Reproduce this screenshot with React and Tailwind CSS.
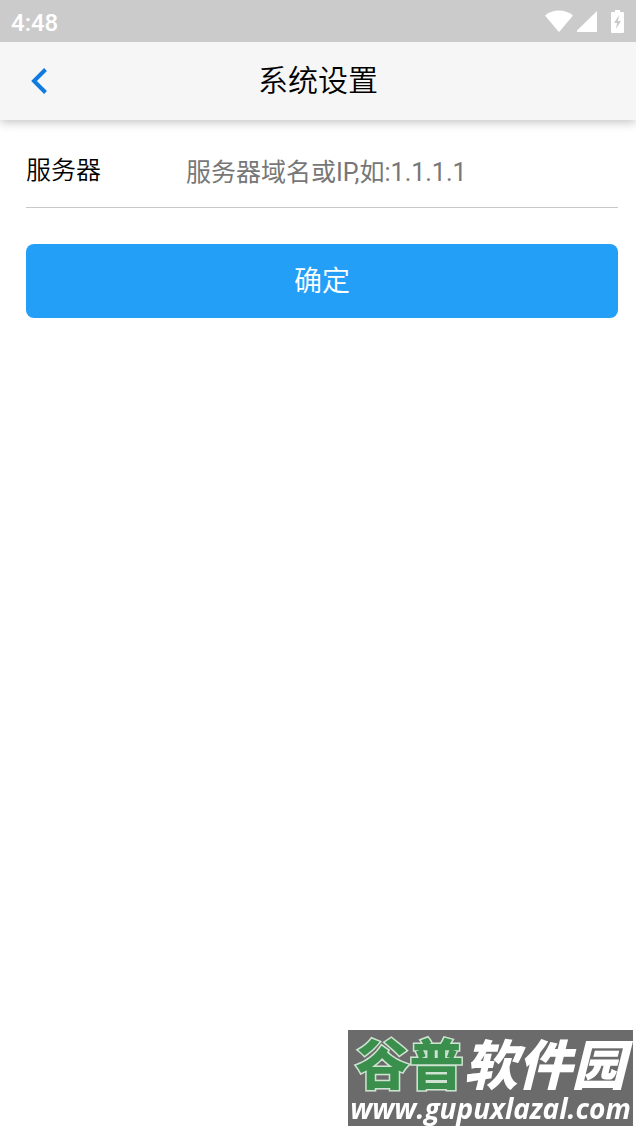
import { useState } from 'react'

function StatusBar() {
  return (
    <div className="relative z-10 flex h-[42px] items-center justify-between bg-[#cbcbcb] pl-[11px] pr-3 text-white">
      <span className="pt-1 text-2xl font-medium">4:48</span>
      <div className="flex items-center">
        <svg className="mr-1 h-[22px] w-7" viewBox="0 0 28 22" fill="currentColor" aria-label="Wi-Fi">
          <path d="M0 5.5C8-1.2 20-1.2 28 5.5L14.6 21.5Q14 22 13.4 21.5Z" />
        </svg>
        <svg className="mr-3.5 h-[22px] w-5" viewBox="0 0 20 22" fill="currentColor" aria-label="Signal">
          <path d="M20 1V22H0V20.5Z" />
        </svg>
        <svg className="h-[23px] w-[13px]" viewBox="0 0 13 23" fill="currentColor" aria-label="Battery">
          <path
            fillRule="evenodd"
            d="M4 0H9V2H12Q13 2 13 3V22Q13 23 12 23H1Q0 23 0 22V3Q0 2 1 2H4ZM8 5L3 13H6L5 19L10 11H7Z"
          />
        </svg>
      </div>
    </div>
  )
}

function NavBar() {
  return (
    <header className="grid h-[78px] grid-cols-[1fr_auto_1fr] items-center bg-[#f6f6f6] shadow-[0_2px_10px_rgba(0,0,0,0.25)]">
      <button type="button" aria-label="返回" className="justify-self-start pl-[30px] text-[#0f7be0]">
        <svg className="h-7 w-[18px]" viewBox="0 0 18 28" fill="none" stroke="currentColor" strokeWidth="4">
          <path d="M15.5 2.5L4 14L15.5 25.5" />
        </svg>
      </button>
      <h1 className="text-[30px] font-[350] leading-9">系统设置</h1>
    </header>
  )
}

function Watermark() {
  return (
    <div className="fixed bottom-1 right-[3px] flex h-24 w-[285px] flex-col items-center bg-[#6b6b6b] pt-2.5 font-bold text-white">
      <div className="whitespace-nowrap text-[54px] font-black leading-[54px]">
        <span className="text-[#3a8f4c] [paint-order:stroke_fill] [-webkit-text-stroke:3px_#cfe3d2]">谷普</span>
        <span className="italic">软件园</span>
      </div>
      <div className="whitespace-nowrap font-['Open_Sans','Noto_Sans',sans-serif] text-[28px] italic leading-7">
        www.gupuxlazal.com
      </div>
    </div>
  )
}

export default function App() {
  const [server, setServer] = useState('')

  return (
    <div className="min-h-screen bg-white font-[Roboto,'Noto_Sans_CJK_SC',sans-serif] text-black">
      <StatusBar />
      <NavBar />
      <form onSubmit={(e) => e.preventDefault()} className="pl-[26px] pr-[18px] pt-4 font-[350]">
        <div className="flex h-[72px] items-center border-b border-[#c8c8c8] pt-0.5">
          <label htmlFor="server" className="w-40 shrink-0 pb-1 text-[25px]">
            服务器
          </label>
          <input
            id="server"
            type="text"
            value={server}
            onChange={(e) => setServer(e.target.value)}
            placeholder="服务器域名或IP,如:1.1.1.1"
            className="min-w-0 flex-1 text-[25px] font-normal outline-none placeholder:text-[#777777]"
          />
        </div>
        <button
          type="submit"
          className="mt-9 h-[74px] w-full rounded-lg bg-[#249ff8] pt-0.5 text-[28px] text-white"
        >
          确定
        </button>
      </form>
      <Watermark />
    </div>
  )
}
